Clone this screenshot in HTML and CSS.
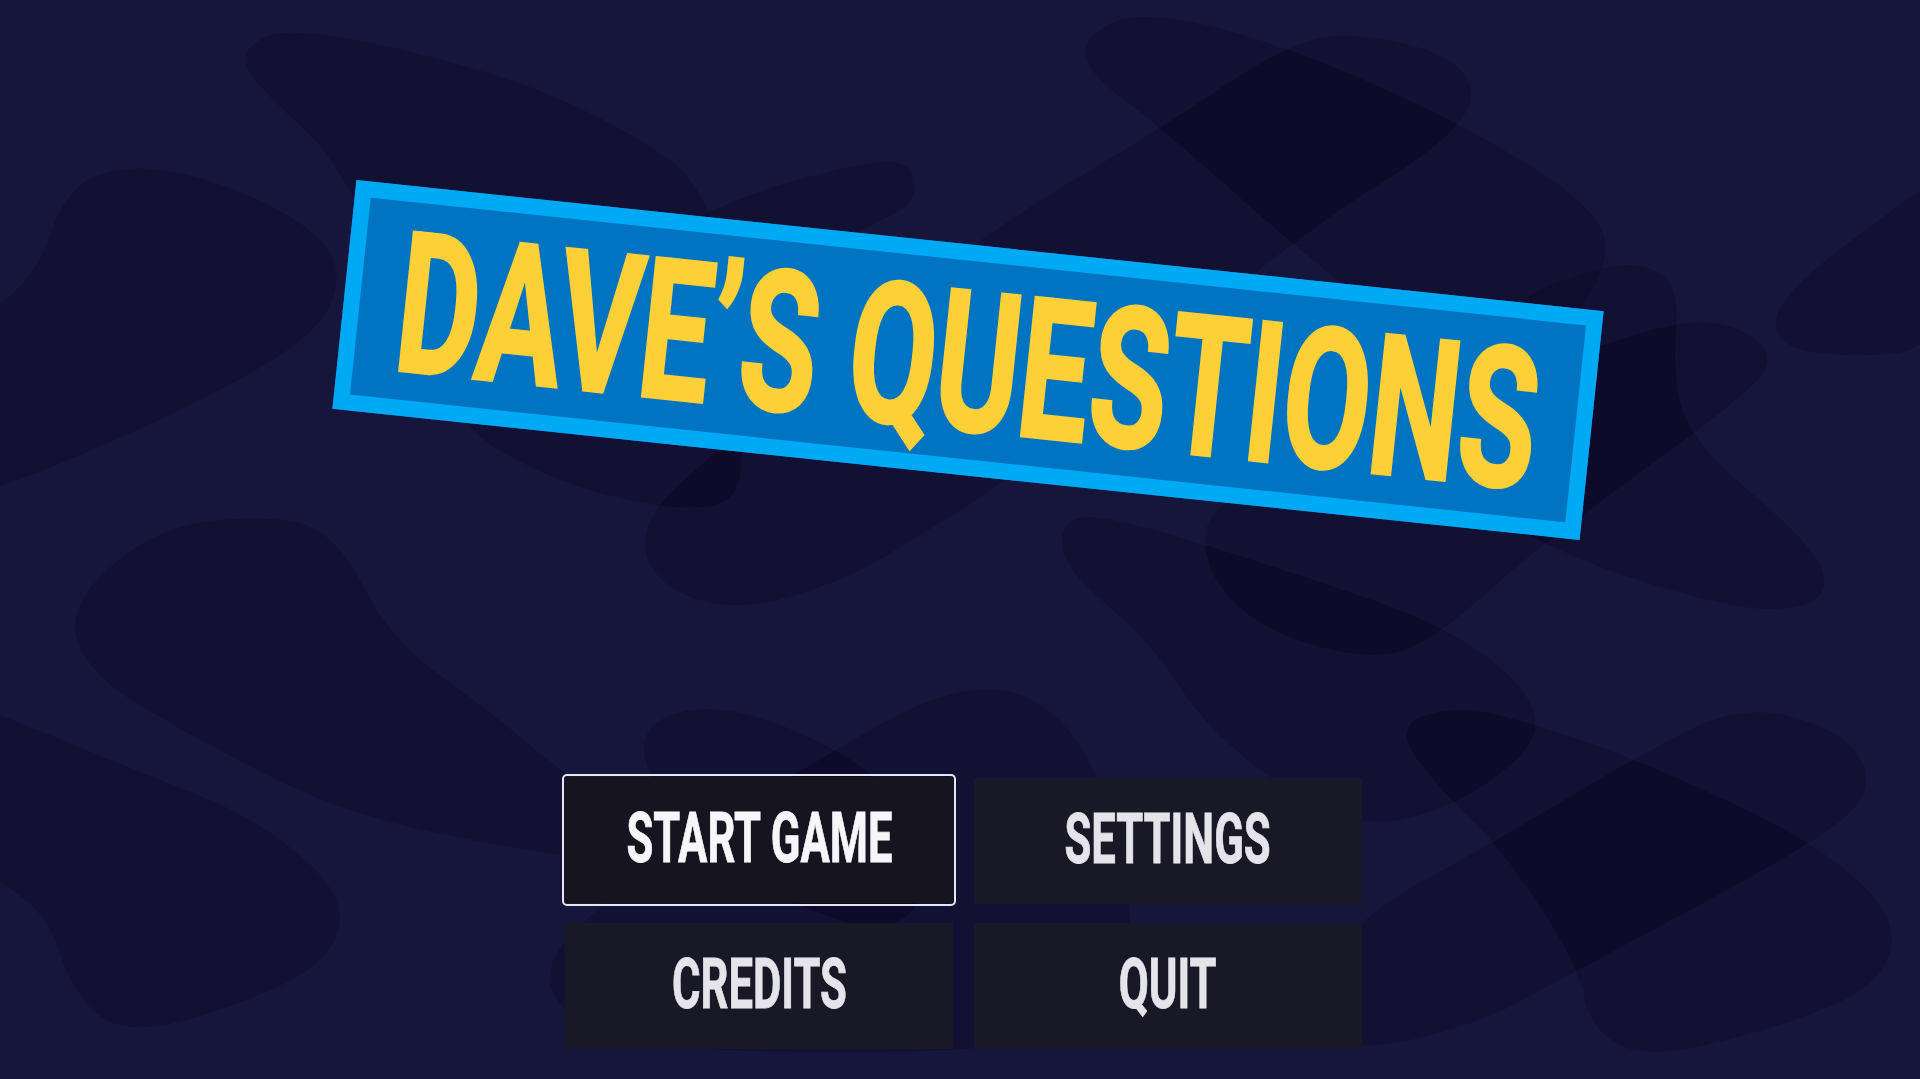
FILE: index.html
```html
<!DOCTYPE html>
<html lang="en">
<head>
<meta charset="utf-8">
<title>Dave's Questions</title>
<link rel="stylesheet" href="styles.css">
</head>
<body>
<svg class="blobs" viewBox="0 0 1920 1079" aria-hidden="true">
<defs>
<clipPath id="clip-j"><use href="#blob-j"/></clipPath>
<clipPath id="clip-o"><use href="#blob-o"/></clipPath>
<clipPath id="clip-q"><use href="#blob-q"/></clipPath>
<clipPath id="clip-m"><use href="#blob-m"/></clipPath>
<clipPath id="clip-a"><use href="#blob-a"/></clipPath>
<clipPath id="clip-h"><use href="#blob-h"/></clipPath>
</defs>
<path id="blob-a" d="M265 37 Q290 25 390 47 Q490 70 555 97 Q620 125 670 160 Q720 195 732 322 Q745 450 740 477 Q735 505 702 507 Q670 510 615 497 Q560 485 502 452 Q445 420 397 295 Q350 170 302 127 Q255 85 247 67 Q240 50 265 37Z"/>
<path id="blob-b" d="M892 162 Q915 165 915 185 Q915 205 892 215 Q870 225 795 267 Q720 310 660 335 Q600 360 580 330 Q560 300 635 252 Q710 205 790 182 Q870 160 892 162Z"/>
<path d="M161 170 Q200 175 247 195 Q295 215 320 240 Q345 265 332 300 Q320 335 252 372 Q185 410 92 450 Q0 490 -20 490 Q-40 490 -40 410 Q-40 330 -2 305 Q35 280 50 235 Q65 190 93 177 Q122 165 161 170Z"/>
<path id="blob-k" d="M1410 45 Q1468 60 1471 92 Q1475 125 1381 183 Q1288 241 1149 360 Q1010 480 961 510 Q912 540 884 557 Q857 575 802 593 Q747 612 703 601 Q660 590 647 557 Q635 525 682 482 Q729 440 847 342 Q966 245 1064 186 Q1162 128 1221 88 Q1281 48 1316 39 Q1352 30 1410 45Z"/>
<path id="blob-j" d="M1114 22 Q1144 10 1214 27 Q1285 45 1375 85 Q1465 125 1532 167 Q1600 210 1605 240 Q1610 270 1575 315 Q1540 360 1470 345 Q1400 330 1344 285 Q1288 241 1225 184 Q1162 128 1123 99 Q1085 70 1085 52 Q1085 35 1114 22Z"/>
<path id="blob-m" d="M1550 285 Q1590 270 1615 266 Q1640 262 1660 273 Q1680 285 1676 332 Q1672 380 1683 412 Q1695 445 1742 485 Q1790 525 1810 550 Q1830 575 1822 591 Q1815 608 1772 609 Q1730 610 1632 578 Q1535 546 1467 498 Q1400 450 1455 375 Q1511 300 1550 285Z"/>
<path id="blob-n" d="M1747 334 Q1775 350 1765 370 Q1755 390 1647 467 Q1540 545 1492 588 Q1444 632 1412 647 Q1380 662 1325 648 Q1270 635 1237 605 Q1205 575 1205 537 Q1205 500 1302 460 Q1400 420 1520 375 Q1640 330 1680 324 Q1719 318 1747 334Z"/>
<path id="blob-o" d="M1085 517 Q1110 515 1205 545 Q1300 575 1372 600 Q1444 625 1487 657 Q1530 690 1535 717 Q1540 745 1495 777 Q1450 810 1400 820 Q1350 830 1282 785 Q1215 740 1182 690 Q1150 640 1107 605 Q1065 570 1062 545 Q1060 520 1085 517Z"/>
<path id="blob-q" d="M1427 715 Q1462 705 1498 715 Q1535 725 1584 741 Q1634 758 1725 800 Q1817 842 1858 881 Q1900 920 1890 952 Q1880 985 1833 1005 Q1787 1025 1718 1042 Q1650 1060 1620 1045 Q1590 1030 1584 996 Q1578 963 1537 902 Q1496 841 1470 818 Q1445 795 1418 760 Q1392 725 1427 715Z"/>
<path id="blob-r" d="M1797 718 Q1850 735 1862 762 Q1875 790 1846 816 Q1817 842 1701 904 Q1585 966 1532 995 Q1480 1025 1410 1040 Q1340 1055 1320 1027 Q1300 1000 1330 957 Q1361 915 1428 878 Q1496 841 1565 800 Q1634 758 1689 730 Q1744 702 1797 718Z"/>
<path d="M1950 260 Q1950 350 1890 354 Q1830 358 1800 349 Q1770 340 1777 315 Q1785 290 1852 240 Q1920 190 1935 180 Q1950 170 1950 260Z"/>
<path d="M296 522 Q335 530 363 586 Q392 642 441 676 Q490 711 526 742 Q563 773 631 821 Q700 870 670 865 Q640 860 595 858 Q551 856 447 835 Q343 815 263 773 Q184 732 138 704 Q92 677 78 643 Q65 610 107 570 Q150 530 203 522 Q257 515 296 522Z"/>
<path d="M5 717 Q50 735 101 756 Q153 777 208 799 Q263 822 306 861 Q350 900 337 935 Q325 970 254 997 Q184 1025 147 1027 Q110 1030 90 1007 Q70 985 59 951 Q49 918 24 899 Q0 880 -20 870 Q-40 860 -40 780 Q-40 700 5 717Z"/>
<path id="blob-g" d="M669 716 Q704 702 753 716 Q802 730 851 760 Q900 790 915 845 Q930 900 905 917 Q880 935 830 917 Q780 900 720 850 Q660 800 647 765 Q635 730 669 716Z"/>
<path id="blob-h" d="M1000 690 Q1040 695 1070 732 Q1100 770 1120 845 Q1140 920 1120 975 Q1100 1030 1025 1042 Q950 1055 785 1052 Q620 1050 575 1017 Q530 985 565 942 Q600 900 722 821 Q845 742 902 713 Q960 685 1000 690Z"/>
<use href="#blob-k" clip-path="url(#clip-j)"/>
<use href="#blob-n" clip-path="url(#clip-o)"/>
<use href="#blob-n" clip-path="url(#clip-m)"/>
<use href="#blob-r" clip-path="url(#clip-q)"/>
<use href="#blob-o" clip-path="url(#clip-q)"/>
<use href="#blob-k" clip-path="url(#clip-a)"/>
<use href="#blob-b" clip-path="url(#clip-a)"/>
<use href="#blob-g" clip-path="url(#clip-h)"/>
</svg>
<main class="screen">
  <h1 class="banner"><span class="banner-text">DAVE’S QUESTIONS</span></h1>
  <nav class="menu">
    <button class="menu-btn is-selected"><span class="menu-label">START GAME</span></button>
    <button class="menu-btn"><span class="menu-label">SETTINGS</span></button>
    <button class="menu-btn"><span class="menu-label">CREDITS</span></button>
    <button class="menu-btn"><span class="menu-label">QUIT</span></button>
  </nav>
</main>
</body>
</html>
```
FILE: styles.css
```css
* { box-sizing: border-box; }
html, body { margin: 0; height: 100%; overflow: hidden; }
body { background: #16163c; font-family: Roboto, "Liberation Sans", sans-serif; }
.blobs { position: absolute; inset: 0; width: 100%; height: 100%; }
.blobs path { fill: #0a051c; opacity: .24; }
.screen {
  position: relative;
  height: 100vh;
  padding: 245px 0 30px;
  display: flex;
  flex-direction: column;
  align-items: center;
}
.banner {
  width: 1254px;
  height: 230px;
  margin: 0 0 0 15px;
  border: 16px solid #00a9f4;
  background: #0073c1;
  transform: rotate(6deg);
  display: flex;
  align-items: center;
  justify-content: center;
  font-size: 196px;
  font-weight: 700;
  line-height: 1;
  color: #fdd038;
  overflow: visible;
}
.banner-text {
  flex: none;
  white-space: nowrap;
  -webkit-text-stroke: 3px #fdd038;
  transform: translateY(3px) scaleX(.647);
}
.menu {
  margin: auto 0 0 7px;
  display: grid;
  grid-template-columns: 388px 388px;
  grid-auto-rows: 126px;
  gap: 19px 21px;
}
.menu-btn {
  border: 0;
  padding: 0;
  background: #191827;
  color: #e4e4ea;
  font: 700 70px/1 Roboto, "Liberation Sans", sans-serif;
  display: flex;
  align-items: center;
  justify-content: center;
  overflow: visible;
}
.menu-label {
  flex: none;
  white-space: nowrap;
  -webkit-text-stroke: .8px currentColor;
  transform: translateY(-2px) scaleX(.623);
}
.is-selected {
  background: #15141f;
  color: #f6f6f9;
  outline: 2px solid #e6e6ee;
  outline-offset: 1px;
  border-radius: 2px;
  transform: translateY(-1px);
}
```
